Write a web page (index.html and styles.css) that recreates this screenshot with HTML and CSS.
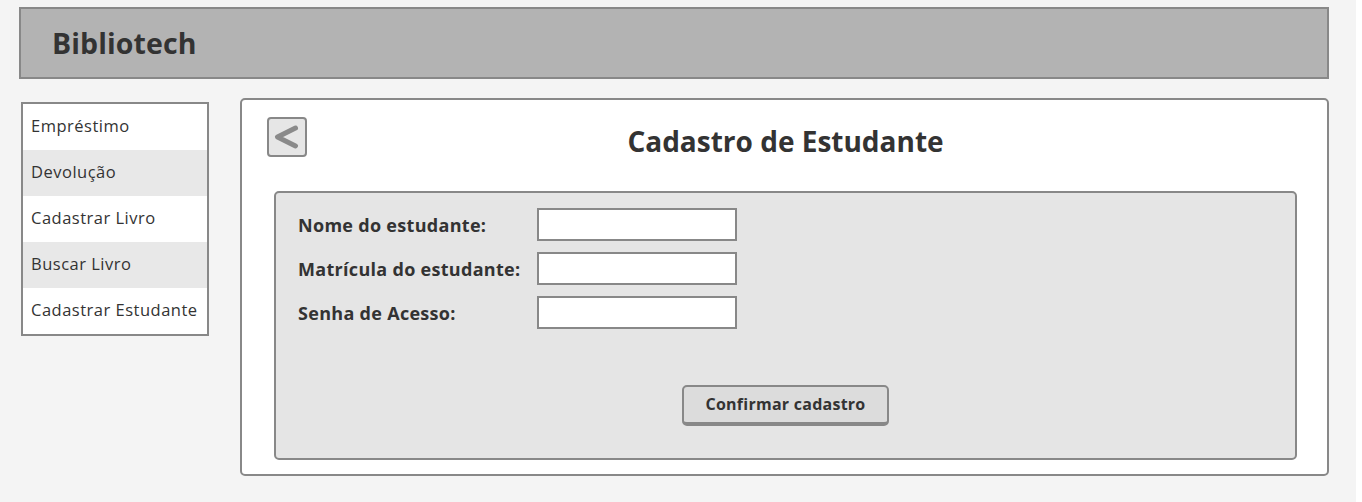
FILE: index.html
```html
<!DOCTYPE html>
<html lang="pt-BR">
<head>
<meta charset="utf-8">
<title>Bibliotech</title>
<link rel="stylesheet" href="styles.css">
</head>
<body>
<div class="page">
  <header class="topbar">
    <h1 class="brand">Bibliotech</h1>
  </header>
  <div class="content">
    <nav class="sidebar">
      <a class="nav-item">Empréstimo</a>
      <a class="nav-item alt">Devolução</a>
      <a class="nav-item">Cadastrar Livro</a>
      <a class="nav-item alt">Buscar Livro</a>
      <a class="nav-item">Cadastrar Estudante</a>
    </nav>
    <main class="card">
      <div class="card-head">
        <button class="back" type="button" aria-label="Voltar">
          <svg width="36" height="36" viewBox="0 0 36 36"><polyline points="26.5,9 8.5,18 26.5,27" fill="none" stroke="#8a8a8a" stroke-width="5" stroke-linecap="round" stroke-linejoin="round"/></svg>
        </button>
        <h2 class="title">Cadastro de Estudante</h2>
      </div>
      <form class="panel">
        <div class="fields">
          <label class="label">Nome do estudante:</label>
          <input class="input" type="text">
          <label class="label">Matrícula do estudante:</label>
          <input class="input" type="text">
          <label class="label">Senha de Acesso:</label>
          <input class="input" type="password">
        </div>
        <div class="actions">
          <button class="confirm" type="button">Confirmar cadastro</button>
        </div>
      </form>
    </main>
  </div>
</div>
</body>
</html>
```
FILE: styles.css
```css
html { background: #ffffff; }
body {
  margin: 0;
  font-family: "Open Sans", "Noto Sans", sans-serif;
  color: #333333;
}
.page {
  width: 1356px;
  min-height: 502px;
  box-sizing: border-box;
  background: #f4f4f4;
  padding: 7px 27px 0 19px;
}
.topbar {
  height: 72px;
  box-sizing: border-box;
  background: #b3b3b3;
  border: 2px solid #888888;
  display: flex;
  align-items: center;
  padding-left: 31px;
}
.brand {
  margin: 0 0 1px 0;
  font-size: 28.5px;
  font-weight: 700;
  color: #333333;
  letter-spacing: 0.1px;
}
.content {
  display: flex;
  align-items: flex-start;
  margin-top: 19px;
}
.sidebar {
  margin: 4px 0 0 2px;
  width: 188px;
  box-sizing: border-box;
  border: 2px solid #888888;
  background: #ffffff;
  display: flex;
  flex-direction: column;
}
.nav-item {
  height: 46px;
  display: flex;
  align-items: center;
  padding: 0 0 3px 8px;
  box-sizing: border-box;
  font-size: 16.5px;
  letter-spacing: 0.5px;
  color: #333333;
  white-space: nowrap;
}
.nav-item.alt { background: #e8e8e8; }
.card {
  margin-left: 31px;
  flex: 1;
  height: 378px;
  box-sizing: border-box;
  background: #ffffff;
  border: 2px solid #888888;
  border-radius: 5px;
  padding: 17px 30px 14px 32px;
  display: flex;
  flex-direction: column;
}
.card-head {
  position: relative;
  height: 40px;
  display: flex;
  align-items: center;
  justify-content: center;
  margin-bottom: 34px;
}
.back {
  position: absolute;
  left: -7px;
  top: 0;
  width: 40px;
  height: 40px;
  box-sizing: border-box;
  padding: 0;
  border: 2px solid #888888;
  border-radius: 4px;
  background: #e6e6e6;
  display: flex;
  align-items: center;
  justify-content: center;
}
.title {
  margin: 8px 0 0 0;
  font-size: 28px;
  font-weight: 700;
  color: #333333;
}
.panel {
  flex: 1;
  box-sizing: border-box;
  background: #e5e5e5;
  border: 2px solid #888888;
  border-radius: 5px;
  padding: 15px 22px 32px 22px;
  display: flex;
  flex-direction: column;
  justify-content: space-between;
}
.fields {
  display: grid;
  grid-template-columns: 239px 200px;
  row-gap: 11px;
  align-items: center;
}
.label {
  font-size: 18px;
  font-weight: 700;
  letter-spacing: 0.3px;
  color: #333333;
  white-space: nowrap;
}
.input {
  width: 200px;
  height: 33px;
  box-sizing: border-box;
  margin: 0;
  border: 2px solid #888888;
  background: #ffffff;
}
.actions {
  display: flex;
  justify-content: center;
}
.confirm {
  width: 207px;
  height: 41px;
  box-sizing: border-box;
  border: 2px solid #888888;
  border-bottom-width: 4px;
  border-radius: 5px;
  background: #dcdcdc;
  font-family: inherit;
  font-size: 16px;
  letter-spacing: 0.25px;
  font-weight: 700;
  color: #333333;
  padding: 0 0 2px 0;
}
```
